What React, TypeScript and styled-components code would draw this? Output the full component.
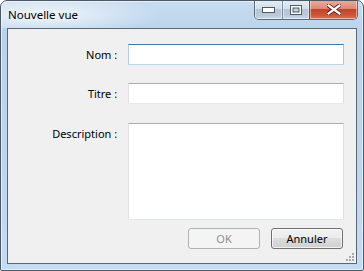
import styled, { createGlobalStyle } from 'styled-components';

const Global = createGlobalStyle`
    html, body { margin: 0; padding: 0; background: #ffffff; }
    body { font-family: "Noto Sans", "Open Sans", sans-serif; font-size: 11px; }
    * { box-sizing: border-box; }
`;

const Frame = styled.div`
    width: 364px;
    height: 271px;
    display: flex;
    flex-direction: column;
    border: 1px solid #4b5866;
    border-radius: 7px 7px 2px 2px;
    background: linear-gradient(180deg, #c8dcef 0%, #b9d3ec 12%, #bcd6ee 60%, #c4dcf3 100%);
    box-shadow: inset 0 0 0 1px rgba(255, 255, 255, 0.55);
    overflow: hidden;
`;

const TitleBar = styled.div`
    height: 28px;
    display: flex;
    align-items: flex-start;
    justify-content: space-between;
    padding-left: 7px;
    padding-right: 5px;
    background: radial-gradient(ellipse 120px 22px at 40px 14px, rgba(255,255,255,0.75), rgba(255,255,255,0) 100%);
`;

const Title = styled.div`
    font-family: "Noto Sans", sans-serif;
    font-size: 11.5px;
    color: #000;
    margin-top: 6px;
    text-shadow: 0 0 6px rgba(255, 255, 255, 0.9);
`;

const Caption = styled.div`
    display: flex;
    margin-top: -1px;
    border: 1px solid #5d6b7b;
    border-top: none;
    border-radius: 0 0 5px 5px;
    overflow: hidden;
    height: 20px;
`;

const CapButton = styled.div<{ $w: number; $close?: boolean }>`
    width: ${p => p.$w}px;
    height: 100%;
    display: flex;
    align-items: center;
    justify-content: center;
    border-left: ${p => (p.$close ? '1px solid #6b4a44' : '1px solid #7d8c9c')};
    background: ${p =>
        p.$close
            ? 'linear-gradient(180deg, #e9ad9f 0%, #dc8a76 45%, #c4432a 50%, #cf5a3c 85%, #e27f5c 100%)'
            : 'linear-gradient(180deg, #e6eef7 0%, #d3dfeb 45%, #b3c4d6 50%, #bccbdb 85%, #cfdbe7 100%)'};
    box-shadow: inset 0 0 0 1px rgba(255, 255, 255, 0.45);
    &:first-child { border-left: none; }
`;

const Body = styled.div`
    flex: 1;
    display: flex;
    padding: 0 6px 6px 6px;
`;

const Client = styled.div`
    flex: 1;
    display: flex;
    flex-direction: column;
    border: 1px solid #5b6874;
    background: #f0f0f0;
    padding: 15px 11px 14px 0;
    position: relative;
`;

const Form = styled.div`
    display: grid;
    grid-template-columns: 112px 216px;
    column-gap: 8px;
    row-gap: 18px;
    grid-template-rows: 21px 21px 98px;
`;

const Label = styled.label<{ $top?: boolean; $gap?: number }>`
    display: flex;
    justify-content: flex-end;
    align-items: ${p => (p.$top ? 'flex-start' : 'center')};
    padding-top: ${p => (p.$top ? '3px' : '0')};
    margin-top: ${p => p.$gap ?? 0}px;
    color: #000;
    font-size: 11px;
    white-space: pre;
`;

const Field = styled.div<{ $focused?: boolean; $gap?: number }>`
    background: #fff;
    margin-top: ${p => p.$gap ?? 0}px;
    border: 1px solid;
    border-color: ${p =>
        p.$focused ? '#3d7bad #a4c9e3 #b7d9ed #b5cfe7' : '#abadb3 #dbdfe6 #e3e9ef #e2e3ea'};
`;

const Actions = styled.div`
    display: flex;
    justify-content: flex-end;
    gap: 11px;
    margin-top: 8px;
    padding-right: 2px;
`;

const Button = styled.button<{ $disabled?: boolean }>`
    width: 72px;
    height: 21px;
    font-family: "Noto Sans", sans-serif;
    font-size: 11px;
    padding: 0;
    border-radius: 3px;
    border: 1px solid ${p => (p.$disabled ? '#adb2b5' : '#707070')};
    color: ${p => (p.$disabled ? '#8d8d8d' : '#000')};
    background: ${p =>
        p.$disabled
            ? '#f4f4f4'
            : 'linear-gradient(180deg, #f2f2f2 0%, #ebebeb 49%, #dddddd 50%, #cfcfcf 100%)'};
    box-shadow: inset 0 0 0 1px ${p => (p.$disabled ? '#f4f4f4' : 'rgba(255,255,255,0.7)')};
`;

const Grip = styled.svg`
    position: absolute;
    right: 1px;
    bottom: 1px;
`;

export default function App() {
    return (
        <>
            <Global />
            <Frame>
                <TitleBar>
                    <Title>Nouvelle vue</Title>
                    <Caption>
                        <CapButton $w={27}>
                            <svg width="13" height="6" viewBox="0 0 13 6">
                                <rect x="0.5" y="0.5" width="12" height="5" fill="#fff" stroke="#4a5a6c" />
                            </svg>
                        </CapButton>
                        <CapButton $w={27}>
                            <svg width="12" height="10" viewBox="0 0 12 10">
                                <rect x="0.5" y="0.5" width="11" height="9" fill="#fff" stroke="#4a5a6c" />
                                <rect x="3" y="3" width="6" height="4" fill="#c3d0dd" stroke="#4a5a6c" strokeWidth="1" />
                            </svg>
                        </CapButton>
                        <CapButton $w={48} $close>
                            <svg width="14" height="11" viewBox="0 0 14 11">
                                <path d="M1.5 1.5 L12.5 9.5 M12.5 1.5 L1.5 9.5" stroke="#5a1f14" strokeWidth="4" strokeLinecap="square" />
                                <path d="M1.5 1.5 L12.5 9.5 M12.5 1.5 L1.5 9.5" stroke="#fff" strokeWidth="2.2" strokeLinecap="square" />
                            </svg>
                        </CapButton>
                    </Caption>
                </TitleBar>
                <Body>
                    <Client>
                        <Form>
                            <Label>Nom : </Label>
                            <Field $focused />
                            <Label>Titre : </Label>
                            <Field />
                            <Label $top $gap={1}>Description : </Label>
                            <Field $gap={1} />
                        </Form>
                        <Actions>
                            <Button $disabled>OK</Button>
                            <Button>Annuler</Button>
                        </Actions>
                        <Grip width="10" height="10" viewBox="0 0 10 10">
                            <g fill="#a8a8a8">
                                <rect x="7" y="1" width="2" height="2" />
                                <rect x="4" y="4" width="2" height="2" />
                                <rect x="7" y="4" width="2" height="2" />
                                <rect x="1" y="7" width="2" height="2" />
                                <rect x="4" y="7" width="2" height="2" />
                                <rect x="7" y="7" width="2" height="2" />
                            </g>
                        </Grip>
                    </Client>
                </Body>
            </Frame>
        </>
    );
}
